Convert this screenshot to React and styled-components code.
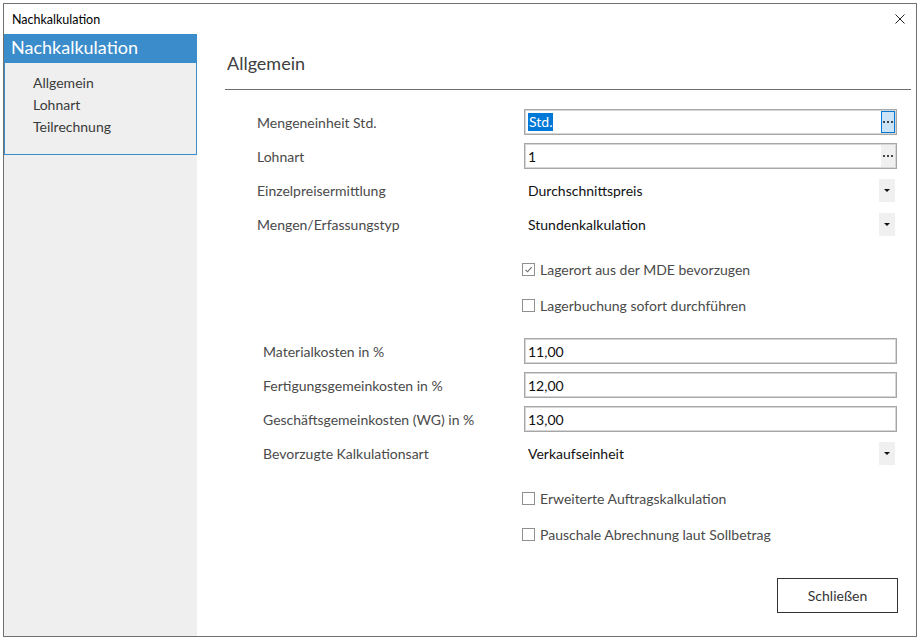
import React from 'react';
import styled, { createGlobalStyle } from 'styled-components';

const GlobalStyle = createGlobalStyle`
  html, body {
    margin: 0;
    padding: 0;
    background: #ffffff;
  }
  body {
    font-family: Lato, "Liberation Sans", sans-serif;
  }
`;

const Dots = () => (
  <svg viewBox="0 0 10 2" width="10" height="2">
    <rect x="0" y="0" width="2" height="2" />
    <rect x="4" y="0" width="2" height="2" />
    <rect x="8" y="0" width="2" height="2" />
  </svg>
);

export default function App() {
  return (
    <>
      <GlobalStyle />
      <Window>
        <TitleBar>
          <span>Nachkalkulation</span>
          <CloseIcon viewBox="0 0 10 10">
            <path d="M0.5 0.5 L9.5 9.5 M9.5 0.5 L0.5 9.5" />
          </CloseIcon>
        </TitleBar>
        <Body>
          <Sidebar>
            <NavBox>
              <NavHeader>Nachkalkulation</NavHeader>
              <NavList>
                <NavItem>Allgemein</NavItem>
                <NavItem>Lohnart</NavItem>
                <NavItem>Teilrechnung</NavItem>
              </NavList>
            </NavBox>
          </Sidebar>
          <Content>
            <Header>
              <h2>Allgemein</h2>
            </Header>
            <Form>
              <Row>
                <Label>Mengeneinheit Std.</Label>
                <Input>
                  <Selected>Std.</Selected>
                  <DotsButton $focused><Dots /></DotsButton>
                </Input>
              </Row>
              <Row>
                <Label>Lohnart</Label>
                <Input>
                  <span>1</span>
                  <DotsButton><Dots /></DotsButton>
                </Input>
              </Row>
              <Row>
                <Label>Einzelpreisermittlung</Label>
                <Select>
                  <span>Durchschnittspreis</span>
                  <Arrow />
                </Select>
              </Row>
              <Row>
                <Label>Mengen/Erfassungstyp</Label>
                <Select>
                  <span>Stundenkalkulation</span>
                  <Arrow />
                </Select>
              </Row>

              <CheckGroup $top={10}>
                <CheckRow>
                  <Box $checked>
                    <svg viewBox="0 0 9 9"><path d="M1.5 4.8 L3.6 6.8 L7.6 2.2" /></svg>
                  </Box>
                  Lagerort aus der MDE bevorzugen
                </CheckRow>
                <CheckRow>
                  <Box />
                  Lagerbuchung sofort durchführen
                </CheckRow>
              </CheckGroup>

              <Group $top={11}>
                <Row>
                  <Label $indent>Materialkosten in %</Label>
                  <Input><span>11,00</span></Input>
                </Row>
                <Row>
                  <Label $indent>Fertigungsgemeinkosten in %</Label>
                  <Input><span>12,00</span></Input>
                </Row>
                <Row>
                  <Label $indent>Geschäftsgemeinkosten (WG) in %</Label>
                  <Input><span>13,00</span></Input>
                </Row>
                <Row>
                  <Label $indent>Bevorzugte Kalkulationsart</Label>
                  <Select>
                    <span>Verkaufseinheit</span>
                    <Arrow />
                  </Select>
                </Row>
              </Group>

              <CheckGroup $top={10}>
                <CheckRow>
                  <Box />
                  Erweiterte Auftragskalkulation
                </CheckRow>
                <CheckRow>
                  <Box />
                  Pauschale Abrechnung laut Sollbetrag
                </CheckRow>
              </CheckGroup>
            </Form>
            <Footer>
              <Button>Schließen</Button>
            </Footer>
          </Content>
        </Body>
      </Window>
    </>
  );
}

const Window = styled.div`
  margin: 3px;
  width: 912px;
  height: 632px;
  border: 1px solid #707070;
  background: #ffffff;
  display: flex;
  flex-direction: column;
`;

const TitleBar = styled.div`
  height: 30px;
  flex-shrink: 0;
  display: flex;
  align-items: center;
  justify-content: space-between;
  padding: 0 11px 0 8px;
  font-size: 12.5px;
  color: #000;
`;

const CloseIcon = styled.svg`
  width: 10px;
  height: 10px;
  path {
    stroke: #222;
    stroke-width: 1;
    fill: none;
  }
`;

const Body = styled.div`
  flex: 1;
  display: flex;
  min-height: 0;
`;

const Sidebar = styled.div`
  width: 193px;
  flex-shrink: 0;
  background: #efefef;
`;

const NavBox = styled.div`
  border: 1px solid #3b8cca;
  border-top: none;
`;

const NavHeader = styled.div`
  height: 29px;
  background: #3b8cca;
  color: #ffffff;
  font-size: 18px;
  line-height: 27px;
  padding-left: 6px;
`;

const NavList = styled.div`
  padding: 9px 0 16px 28px;
  display: flex;
  flex-direction: column;
`;

const NavItem = styled.div`
  font-size: 14px;
  line-height: 22px;
  color: #3a3a3a;
`;

const Content = styled.div`
  flex: 1;
  padding: 0 5px 0 28px;
  display: flex;
  flex-direction: column;
`;

const Header = styled.div`
  padding: 17px 0 14px;
  border-bottom: 1px solid #6e6e6e;
  h2 {
    margin: 0 0 0 2px;
    font-size: 18px;
    font-weight: normal;
    line-height: 24px;
    color: #404040;
  }
`;

const Form = styled.div`
  padding: 15px 0 0 32px;
  display: flex;
  flex-direction: column;
`;

const Group = styled.div`
  margin-top: ${p => p.$top}px;
  display: flex;
  flex-direction: column;
`;

const CheckGroup = styled(Group)`
  padding-left: 265px;
`;

const Row = styled.div`
  display: grid;
  grid-template-columns: 267px 373px;
  height: 34px;
  align-items: center;
`;

const Label = styled.div`
  font-size: 14px;
  color: #4a4a4a;
  padding-left: ${p => (p.$indent ? 6 : 0)}px;
`;

const Input = styled.div`
  height: 26px;
  box-sizing: border-box;
  border: 1px solid #a6a6a6;
  box-shadow: inset 0 0 0 1px #d6d6d6;
  display: flex;
  align-items: center;
  justify-content: space-between;
  padding: 0 1px 0 3px;
  font-size: 14px;
  color: #111;
`;

const Selected = styled.span`
  background: #0078d7;
  color: #ffffff;
  padding: 0 1px;
  line-height: 18px;
`;

const DotsButton = styled.div`
  width: 14px;
  height: 22px;
  box-sizing: border-box;
  display: flex;
  align-items: center;
  justify-content: center;
  background: ${p => (p.$focused ? '#cce4f7' : '#f0f0f0')};
  border: 1px solid ${p => (p.$focused ? '#0078d7' : '#f0f0f0')};
  svg {
    fill: #444;
  }
`;

const Select = styled.div`
  height: 26px;
  display: flex;
  align-items: center;
  justify-content: space-between;
  padding: 0 2px 0 4px;
  font-size: 14px;
  color: #111;
`;

const Arrow = styled.div`
  width: 16px;
  height: 23px;
  background: #f0f0f0;
  display: flex;
  align-items: center;
  justify-content: center;
  &::after {
    content: '';
    border-left: 3px solid transparent;
    border-right: 3px solid transparent;
    border-top: 3px solid #111;
  }
`;

const CheckRow = styled.div`
  height: 36px;
  display: flex;
  align-items: center;
  gap: 5px;
  font-size: 14px;
  color: #4a4a4a;
`;

const Box = styled.div`
  width: 13px;
  height: 13px;
  box-sizing: border-box;
  border: 1px solid #8f8f8f;
  background: #fff;
  display: flex;
  align-items: center;
  justify-content: center;
  svg {
    width: 9px;
    height: 9px;
    path {
      fill: none;
      stroke: #6a6a6a;
      stroke-width: 1.1;
    }
  }
`;

const Footer = styled.div`
  display: flex;
  justify-content: flex-end;
  padding: 26px 13px 0 0;
`;

const Button = styled.button`
  width: 121px;
  height: 35px;
  background: #fff;
  border: 1px solid #333;
  font-family: Lato, "Liberation Sans", sans-serif;
  font-size: 14px;
  color: #333;
`;
